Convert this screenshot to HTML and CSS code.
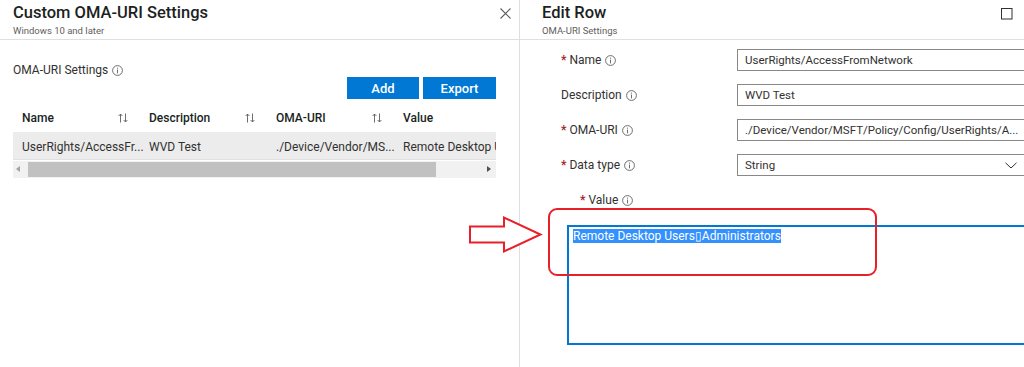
FILE: index.html
```html
<!DOCTYPE html>
<html lang="en">
<head>
    <meta charset="UTF-8">
    <meta name="viewport" content="width=device-width, initial-scale=1.0">
    <title>Custom OMA-URI Settings</title>
    <link rel="stylesheet" href="styles.css">
</head>
<body>
    <div class="page">
        <!-- list blade -->
        <section class="blade blade-list">
            <header class="blade-head">
                <div class="head-text">
                    <h1>Custom OMA-URI Settings</h1>
                    <p class="sub">Windows 10 and later</p>
                </div>
                <button class="icon-btn close" aria-label="Close">
                    <svg width="11" height="11" viewBox="0 0 11 11"><path d="M0.5 0.5L10.5 10.5M10.5 0.5L0.5 10.5" stroke="#605e5c" stroke-width="1.1" fill="none"/></svg>
                </button>
            </header>

            <div class="blade-body">
                <div class="section-label">
                    OMA-URI Settings
                    <svg class="info" width="11" height="11" viewBox="0 0 11 11"><circle cx="5.5" cy="5.5" r="4.9" stroke="#605e5c" stroke-width="0.9" fill="none"/><path d="M5.5 4.6V8.4" stroke="#605e5c" stroke-width="0.9"/><circle cx="5.5" cy="3.1" r="0.6" fill="#605e5c"/></svg>
                </div>

                <div class="toolbar">
                    <button class="btn">Add</button>
                    <button class="btn">Export</button>
                </div>

                <div class="grid">
                    <div class="grid-row grid-head">
                        <div class="cell">Name <svg class="sort" width="10" height="10" viewBox="0 0 10 10"><path d="M2.5 1V9.5M0.6 3L2.5 1L4.4 3M7.5 0.5V9M5.6 7L7.5 9L9.4 7" stroke="#605e5c" stroke-width="0.9" fill="none"/></svg></div>
                        <div class="cell">Description <svg class="sort" width="10" height="10" viewBox="0 0 10 10"><path d="M2.5 1V9.5M0.6 3L2.5 1L4.4 3M7.5 0.5V9M5.6 7L7.5 9L9.4 7" stroke="#605e5c" stroke-width="0.9" fill="none"/></svg></div>
                        <div class="cell">OMA-URI <svg class="sort" width="10" height="10" viewBox="0 0 10 10"><path d="M2.5 1V9.5M0.6 3L2.5 1L4.4 3M7.5 0.5V9M5.6 7L7.5 9L9.4 7" stroke="#605e5c" stroke-width="0.9" fill="none"/></svg></div>
                        <div class="cell">Value</div>
                    </div>
                    <div class="grid-row grid-item">
                        <div class="cell">UserRights/AccessFr...</div>
                        <div class="cell">WVD Test</div>
                        <div class="cell">./Device/Vendor/MS...</div>
                        <div class="cell">Remote Desktop Users</div>
                    </div>
                    <div class="hscroll">
                        <span class="arrow-l"></span>
                        <span class="thumb"></span>
                        <span class="arrow-r"></span>
                    </div>
                </div>
            </div>
        </section>

        <!-- edit blade -->
        <section class="blade blade-edit">
            <header class="blade-head">
                <div class="head-text">
                    <h1>Edit Row</h1>
                    <p class="sub">OMA-URI Settings</p>
                </div>
                <button class="icon-btn max" aria-label="Maximize">
                    <svg width="12" height="12" viewBox="0 0 12 12"><rect x="0.5" y="0.5" width="10.5" height="10.5" stroke="#323130" stroke-width="1" fill="none"/></svg>
                </button>
            </header>

            <form class="form">
                <div class="field">
                    <label class="req">Name <svg class="info" width="11" height="11" viewBox="0 0 11 11"><circle cx="5.5" cy="5.5" r="4.9" stroke="#605e5c" stroke-width="0.9" fill="none"/><path d="M5.5 4.6V8.4" stroke="#605e5c" stroke-width="0.9"/><circle cx="5.5" cy="3.1" r="0.6" fill="#605e5c"/></svg></label>
                    <div class="control">UserRights/AccessFromNetwork</div>
                </div>
                <div class="field">
                    <label>Description <svg class="info" width="11" height="11" viewBox="0 0 11 11"><circle cx="5.5" cy="5.5" r="4.9" stroke="#605e5c" stroke-width="0.9" fill="none"/><path d="M5.5 4.6V8.4" stroke="#605e5c" stroke-width="0.9"/><circle cx="5.5" cy="3.1" r="0.6" fill="#605e5c"/></svg></label>
                    <div class="control">WVD Test</div>
                </div>
                <div class="field">
                    <label class="req">OMA-URI <svg class="info" width="11" height="11" viewBox="0 0 11 11"><circle cx="5.5" cy="5.5" r="4.9" stroke="#605e5c" stroke-width="0.9" fill="none"/><path d="M5.5 4.6V8.4" stroke="#605e5c" stroke-width="0.9"/><circle cx="5.5" cy="3.1" r="0.6" fill="#605e5c"/></svg></label>
                    <div class="control">./Device/Vendor/MSFT/Policy/Config/UserRights/A...</div>
                </div>
                <div class="field">
                    <label class="req">Data type <svg class="info" width="11" height="11" viewBox="0 0 11 11"><circle cx="5.5" cy="5.5" r="4.9" stroke="#605e5c" stroke-width="0.9" fill="none"/><path d="M5.5 4.6V8.4" stroke="#605e5c" stroke-width="0.9"/><circle cx="5.5" cy="3.1" r="0.6" fill="#605e5c"/></svg></label>
                    <div class="control select">
                        String
                        <svg class="chevron" width="12" height="7" viewBox="0 0 12 7"><path d="M0.5 0.8L6 6L11.5 0.8" stroke="#323130" stroke-width="1" fill="none"/></svg>
                    </div>
                </div>

                <label class="req value-label">Value <svg class="info" width="11" height="11" viewBox="0 0 11 11"><circle cx="5.5" cy="5.5" r="4.9" stroke="#605e5c" stroke-width="0.9" fill="none"/><path d="M5.5 4.6V8.4" stroke="#605e5c" stroke-width="0.9"/><circle cx="5.5" cy="3.1" r="0.6" fill="#605e5c"/></svg></label>
                <div class="textarea"><span class="selected">Remote Desktop Users&#x25AF;Administrators</span></div>
            </form>
        </section>

        <!-- annotation drawn over the screenshot -->
        <div class="callout-box"></div>
        <svg class="callout-arrow" width="78" height="42" viewBox="0 0 78 42">
            <path d="M3 12.5H37V3.5L73.5 20.5L37 37.5V28.5H3Z" fill="#fff" stroke="#e8202a" stroke-width="2" stroke-linejoin="miter"/>
        </svg>
    </div>
</body>
</html>
```

FILE: styles.css
```css
* {
    margin: 0;
    padding: 0;
    box-sizing: border-box;
}

html, body {
    width: 1024px;
    height: 367px;
    overflow: hidden;
}

body {
    font-family: "Segoe UI", Roboto, "Noto Sans", sans-serif;
    font-size: 12px;
    color: #323130;
    background: #fff;
}

.page {
    display: flex;
    height: 100%;
    position: relative;
}

.blade {
    display: flex;
    flex-direction: column;
    min-width: 0;
}

.blade-list {
    width: 519px;
    flex: none;
}

.blade-edit {
    flex: 1;
    border-left: 1px solid #e1dfdd;
    overflow: hidden;
}

/* headers */
.blade-head {
    height: 40px;
    border-bottom: 1px solid #e1dfdd;
    display: flex;
    justify-content: space-between;
    align-items: flex-start;
    padding: 3px 8px 0 13px;
}

.blade-edit .blade-head {
    padding: 3px 11px 0 22px;
}

h1 {
    font-size: 16.5px;
    line-height: 20px;
    font-weight: 500;
    color: #201f1e;
}

.sub {
    font-size: 9.5px;
    line-height: 12px;
    color: #605e5c;
    margin-top: 2px;
}

.icon-btn {
    background: none;
    border: none;
    display: flex;
    margin-top: 5px;
}

/* list blade */
.blade-body {
    padding: 22px 23px 0 13px;
}

.section-label {
    display: flex;
    align-items: center;
    gap: 4px;
    height: 16px;
}

.toolbar {
    display: flex;
    justify-content: flex-end;
    gap: 4px;
    margin-top: -1px;
}

.btn {
    height: 22px;
    width: 72px;
    background: #0078d4;
    color: #fff;
    border: none;
    font-family: inherit;
    font-size: 13px;
    font-weight: 500;
}

.btn + .btn {
    width: 73px;
}

.grid {
    margin-top: 4px;
    overflow: hidden;
}

.grid-row {
    display: grid;
    grid-template-columns: 127px 127px 127px 200px;
    align-items: center;
    white-space: nowrap;
}

.grid-head {
    height: 29px;
    font-weight: 500;
    color: #201f1e;
}

.grid-head .cell {
    display: flex;
    align-items: center;
    justify-content: space-between;
    padding-right: 12px;
}

.cell {
    padding-left: 9px;
    overflow: hidden;
}

.grid-item {
    height: 28px;
    padding-top: 2px;
    background: #ececec;
    border-bottom: 1px solid #e1e1e1;
}

.grid-item .cell {
    overflow: visible;
}

.hscroll {
    height: 17px;
    background: #f1f1f1;
    display: flex;
    align-items: center;
    margin-top: 1px;
}

.thumb {
    height: 15px;
    width: 408px;
    background: #c1c1c1;
}

.arrow-l,
.arrow-r {
    width: 15px;
    height: 15px;
    position: relative;
}

.arrow-r {
    margin-left: auto;
}

.arrow-l::after,
.arrow-r::after {
    content: "";
    position: absolute;
    top: 4px;
    border: 3.5px solid transparent;
}

.arrow-l::after {
    left: 3px;
    border-right: 4px solid #a3a3a3;
    border-left: 0;
}

.arrow-r::after {
    left: 6px;
    border-left: 4px solid #505050;
    border-right: 0;
}

/* edit blade */
.form {
    padding: 9px 0 0 41px;
    display: flex;
    flex-direction: column;
}

.field {
    display: flex;
    align-items: center;
    height: 22px;
    margin-bottom: 13px;
}

.field label {
    width: 176px;
    flex: none;
}

label {
    display: flex;
    align-items: center;
    gap: 4px;
    white-space: nowrap;
}

label.req::before {
    content: "*";
    color: #a4262c;
    font-weight: 700;
    margin-right: -1px;
}

.control {
    width: 300px;
    flex: none;
    height: 22px;
    border: 1px solid #8a8886;
    padding: 0 7px;
    font-size: 11.5px;
    line-height: 20px;
    white-space: nowrap;
    overflow: hidden;
    display: flex;
    align-items: center;
}

.select {
    justify-content: space-between;
    padding-right: 19px;
}

.value-label {
    margin-top: 3px;
    padding-left: 19px;
    height: 16px;
}

.textarea {
    margin: 17px 0 0 6px;
    width: 500px;
    height: 120px;
    border: 2px solid #0078d4;
    padding: 2px 4px;
    line-height: 15px;
}

.selected {
    background: #3390ff;
    color: #fff;
}

/* red annotation */
.callout-box {
    position: absolute;
    left: 548px;
    top: 208px;
    width: 329px;
    height: 68px;
    border: 2px solid #e8202a;
    border-radius: 9px;
}

.callout-arrow {
    position: absolute;
    left: 467px;
    top: 214px;
}
```
